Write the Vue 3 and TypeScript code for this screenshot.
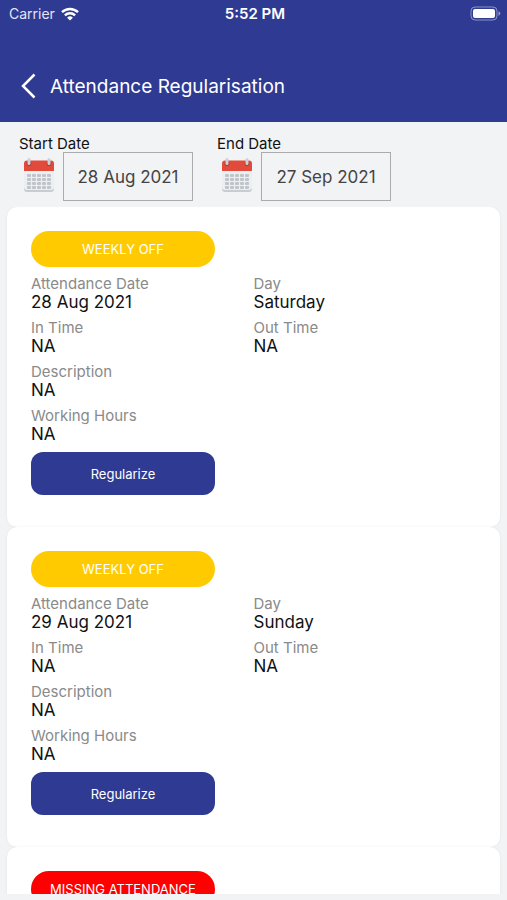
<script setup lang="ts">
import { ref } from 'vue'

interface AttendanceField {
  label: string
  value: string
  wide?: boolean
}

interface AttendanceRecord {
  id: number
  status: string
  kind: 'off' | 'missing'
  fields: AttendanceField[]
}

const filters = ref([
  { id: 'start-date', label: 'Start Date', value: '28 Aug 2021' },
  { id: 'end-date', label: 'End Date', value: '27 Sep 2021' },
])

function emptyDay(date: string, day: string): AttendanceField[] {
  return [
    { label: 'Attendance Date', value: date },
    { label: 'Day', value: day },
    { label: 'In Time', value: 'NA' },
    { label: 'Out Time', value: 'NA' },
    { label: 'Description', value: 'NA', wide: true },
    { label: 'Working Hours', value: 'NA', wide: true },
  ]
}

const records: AttendanceRecord[] = [
  { id: 1, status: 'WEEKLY OFF', kind: 'off', fields: emptyDay('28 Aug 2021', 'Saturday') },
  { id: 2, status: 'WEEKLY OFF', kind: 'off', fields: emptyDay('29 Aug 2021', 'Sunday') },
  { id: 3, status: 'MISSING ATTENDANCE', kind: 'missing', fields: [] },
]

const dotColumns = [5, 10, 15, 20, 25]
const dotRows = [17, 21, 25, 29]
</script>

<template>
  <div class="screen">
    <header class="header">
      <div class="status-bar">
        <div class="carrier">
          <span>Carrier</span>
          <svg class="wifi" viewBox="0 0 18 14" aria-hidden="true">
            <g fill="none" stroke="#fff" stroke-width="2.5">
              <path d="M1 5.2a11.600 11.600 0 0 1 16 0" />
              <path d="M3.900 8.400a7.400 7.400 0 0 1 10.200 0" />
            </g>
            <path d="M9 13.600 6.100 10.700a4.200 4.200 0 0 1 5.800 0z" fill="#fff" />
          </svg>
        </div>
        <span class="clock">5:52 PM</span>
        <svg class="battery" viewBox="0 0 31 15" aria-hidden="true">
          <rect x="1" y="1" width="26" height="13" rx="4" fill="none" stroke="#fff" stroke-opacity=".45" />
          <rect x="3" y="3" width="22" height="9" rx="2" fill="#fff" />
          <path d="M28.5 5.3c2.4.8 2.4 3.6 0 4.4z" fill="#fff" fill-opacity=".5" />
        </svg>
      </div>
      <div class="title-bar">
        <button class="back" type="button" aria-label="Back">
          <svg viewBox="0 0 16 26" aria-hidden="true">
            <path d="M14.500 1.500 3 13 14.500 24.500" fill="none" stroke="#fff" stroke-width="2.5" />
          </svg>
        </button>
        <h1>Attendance Regularisation</h1>
      </div>
    </header>

    <form class="filters" @submit.prevent>
      <div v-for="filter in filters" :key="filter.id" class="filter">
        <label :for="filter.id">{{ filter.label }}</label>
        <div class="picker">
          <svg class="calendar" viewBox="0 0 32 36" aria-hidden="true">
            <rect x="1" y="6" width="30" height="29" rx="3" fill="#c9cdd1" />
            <rect x="1" y="5" width="30" height="28" rx="3" fill="#eceff1" />
            <path d="M1 14V6.500a3 3 0 0 1 3-3h24a3 3 0 0 1 3 3V14z" fill="#e24b3b" />
            <g fill="#bfc5ca">
              <template v-for="y in dotRows" :key="y">
                <rect v-for="x in dotColumns" :key="x" :x="x - 1" :y="y" width="4" height="3" rx="1" />
              </template>
            </g>
            <circle cx="6" cy="6.500" r="2.500" fill="#b63a30" />
            <circle cx="26" cy="6.500" r="2.500" fill="#b63a30" />
            <rect x="4.500" y="1" width="3" height="7" rx="1.500" fill="#ccd1d6" />
            <rect x="24.500" y="1" width="3" height="7" rx="1.500" fill="#ccd1d6" />
          </svg>
          <input :id="filter.id" v-model="filter.value" type="text" readonly />
        </div>
      </div>
    </form>

    <main class="list">
      <article v-for="record in records" :key="record.id" class="card">
        <div class="badge" :class="record.kind">{{ record.status }}</div>
        <template v-if="record.fields.length">
          <dl class="details">
            <div v-for="field in record.fields" :key="field.label" :class="{ wide: field.wide }">
              <dt>{{ field.label }}</dt>
              <dd>{{ field.value }}</dd>
            </div>
          </dl>
          <button class="regularize" type="button">Regularize</button>
        </template>
      </article>
    </main>
  </div>
</template>

<style>
body {
  margin: 0;
  background: #f2f3f5;
}
</style>

<style scoped>
.screen {
  display: flex;
  flex-direction: column;
  box-sizing: border-box;
  height: 100vh;
  padding-bottom: 6px;
  background: #f2f3f5;
  color: #111;
  font-family: Inter, "Liberation Sans", sans-serif;
}

.header {
  flex: none;
  background: #2f3a93;
  color: #fff;
}

.status-bar {
  display: grid;
  grid-template-columns: 1fr auto 1fr;
  align-items: center;
  height: 27px;
  padding: 0 6px 0 9px;
  font-size: 15px;
}

.carrier {
  display: flex;
  align-items: center;
  gap: 6px;
  color: #e3e5f5;
  font-size: 14px;
}

.wifi {
  width: 18px;
  height: 14px;
}

.clock {
  font-weight: 600;
}

.battery {
  justify-self: end;
  width: 31px;
  height: 15px;
}

.title-bar {
  display: flex;
  align-items: center;
  gap: 14px;
  height: 72px;
  padding: 23px 20px 0;
}

.back {
  display: flex;
  padding: 0;
  border: 0;
  background: none;
}

.back svg {
  width: 16px;
  height: 26px;
}

h1 {
  margin: 0;
  font-size: 19px;
  font-weight: 400;
}

.filters {
  display: flex;
  flex: none;
  gap: 24px;
  padding: 13px 19px 6px;
}

.filter {
  width: 174px;
}

.filter label {
  display: block;
  font-size: 15px;
  line-height: 17px;
}

.picker {
  display: flex;
  justify-content: space-between;
  align-items: flex-start;
  padding-left: 4px;
}

.calendar {
  width: 32px;
  height: 36px;
  padding-top: 5px;
}

.picker input {
  box-sizing: border-box;
  width: 130px;
  height: 49px;
  padding: 0;
  border: 1px solid #a9abad;
  border-radius: 0;
  background: transparent;
  color: #444;
  font: inherit;
  font-size: 17px;
  text-align: center;
}

.list {
  flex: 1;
  min-height: 0;
  overflow: hidden;
  padding: 0 7px;
}

.card {
  padding: 24px 24px 32px;
  border-radius: 10px;
  background: #fff;
  box-shadow: 0 0 3px rgba(0, 0, 0, 0.06);
}

.badge,
.regularize {
  display: flex;
  justify-content: center;
  align-items: center;
  width: 184px;
  color: #fff;
}

.badge {
  height: 36px;
  border-radius: 18px;
  font-size: 13px;
}

.off {
  background: #ffcb00;
}

.missing {
  background: #f00;
}

.details {
  display: grid;
  grid-template-columns: 1fr 1fr;
  row-gap: 7px;
  margin: 8px 0;
}

.wide {
  grid-column: 1 / -1;
}

dt {
  color: #8a8a8a;
  font-size: 15px;
  line-height: 18px;
}

dd {
  margin: 0;
  font-size: 17px;
  line-height: 19px;
}

.regularize {
  height: 43px;
  padding: 0;
  border: 0;
  border-radius: 12px;
  background: #2f3a93;
  font-family: inherit;
  font-size: 13px;
}
</style>
